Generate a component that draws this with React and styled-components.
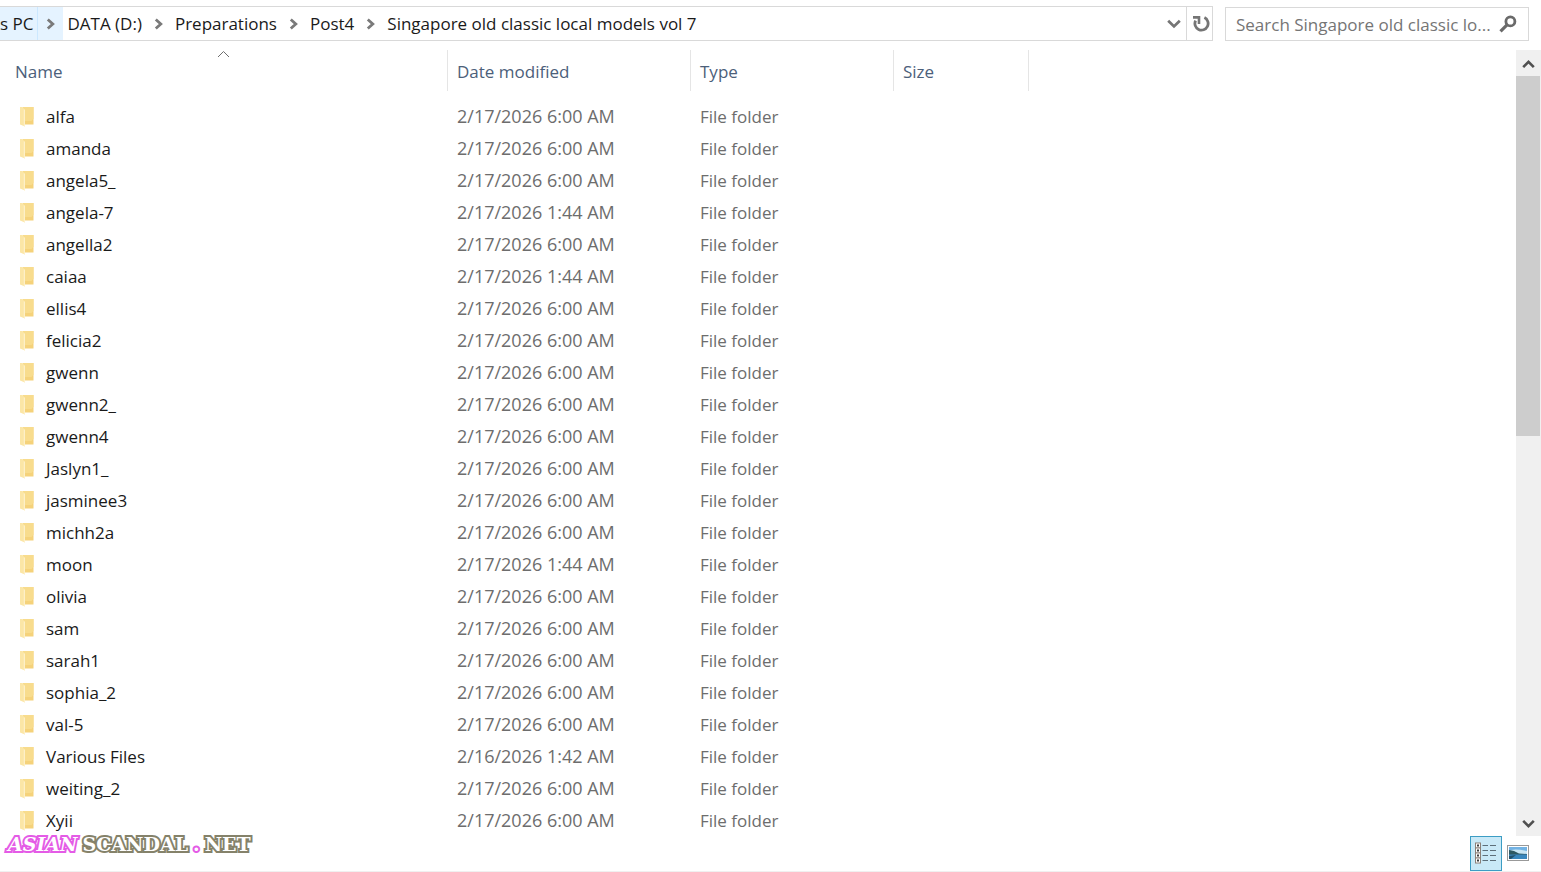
import React from "react";
import styled, { createGlobalStyle } from "styled-components";

const GlobalStyle = createGlobalStyle`
  * {
    box-sizing: border-box;
  }
  body {
    margin: 0;
    background: #fff;
    font-family: "Open Sans", "Noto Sans", sans-serif;
    font-size: 17px;
    color: #1a1a1a;
  }
  button, input {
    font: inherit;
    color: inherit;
  }
`;

const Window = styled.div`
  display: flex;
  flex-direction: column;
  height: 100vh;
  overflow: hidden;
  border-bottom: 1px solid #f0f0f0;
`;

const Toolbar = styled.header`
  display: flex;
  gap: 12px;
  flex: none;
  height: 50px;
  padding: 6px 12px 9px 0;
`;

const AddressBar = styled.nav`
  display: flex;
  flex: 1;
  border: 1px solid #d9d9d9;
  border-left: none;
`;

const Crumbs = styled.ol`
  display: flex;
  flex: 1;
  margin: 0;
  padding: 0;
  list-style: none;
`;

const Crumb = styled.li`
  display: flex;
  align-items: stretch;
  background: ${(props) => (props.$active ? "#e5f3ff" : "transparent")};
`;

const CrumbLink = styled.a`
  display: flex;
  align-items: center;
  padding: 0 4px;
  padding-left: ${(props) => (props.$cut ? "0" : "4px")};
  border-right: ${(props) => (props.$cut ? "1px solid #cce8ff" : "none")};
  color: #1a1a1a;
  text-decoration: none;
  white-space: nowrap;
`;

const CrumbArrow = styled.span`
  display: flex;
  align-items: center;
  justify-content: center;
  width: 25px;
`;

const BarButton = styled.button`
  display: flex;
  align-items: center;
  justify-content: center;
  width: 26px;
  padding: 0;
  border: none;
  border-left: ${(props) => (props.$divided ? "1px solid #d9d9d9" : "none")};
  background: none;
`;

const SearchBox = styled.form`
  display: flex;
  flex: none;
  width: 304px;
  margin-top: 1px;
  padding-left: 10px;
  border: 1px solid #d9d9d9;
`;

const SearchInput = styled.input`
  flex: 1;
  min-width: 0;
  padding: 0;
  border: none;
  outline: none;
  background: none;

  &::placeholder {
    color: #757575;
    opacity: 1;
  }
`;

const SearchButton = styled(BarButton)`
  width: 30px;
  padding-right: 10px;
`;

const Content = styled.main`
  display: flex;
  flex: 1;
  min-height: 0;
`;

const ListPane = styled.div`
  flex: 1;
  overflow: hidden;
`;

const FileTable = styled.table`
  width: 1029px;
  table-layout: fixed;
  border-collapse: collapse;
`;

const Col = styled.col`
  width: ${(props) => props.$width}px;
`;

const HeadCell = styled.th`
  height: 50px;
  padding: 0;
  vertical-align: top;
  font-weight: 400;
  text-align: left;
`;

const HeadLabel = styled.div`
  position: relative;
  display: flex;
  align-items: center;
  height: 41px;
  padding: 2px 9px 0;
  padding-left: ${(props) => (props.$first ? "15px" : "9px")};
  border-right: 1px solid #e5e5e5;
  color: #4c607a;
`;

const SortMark = styled.svg`
  position: absolute;
  top: 0;
  left: 0;
  right: 0;
  margin: 0 auto;
`;

const Cell = styled.td`
  height: 32px;
  padding: 0 9px;
  color: #6d6d6d;
  white-space: nowrap;
`;

const NameCell = styled(Cell)`
  padding-left: 19px;
  color: #1a1a1a;
`;

const DateCell = styled(Cell)`
  font-size: 18px;
`;

const FileName = styled.div`
  display: flex;
  align-items: center;
  gap: 11px;
`;

const Scrollbar = styled.div`
  display: flex;
  flex-direction: column;
  flex: none;
  width: 25px;
  background: #f0f0f0;
`;

const ScrollButton = styled.button`
  display: flex;
  align-items: center;
  justify-content: center;
  flex: none;
  height: 26px;
  padding: 2px 0 0;
  border: none;
  background: none;
`;

const Track = styled.div`
  flex: 1;
  padding-right: 1px;
`;

const Thumb = styled.div`
  height: 49%;
  background: #cdcdcd;
`;

const StatusBar = styled.footer`
  display: flex;
  justify-content: flex-end;
  flex: none;
  height: 35px;
  padding-right: 7px;
`;

const ViewButton = styled.button`
  display: flex;
  align-items: center;
  justify-content: center;
  width: 32px;
  padding: 0 1px 2px 0;
  border: 1px solid ${(props) => (props.$on ? "#3c9dc4" : "transparent")};
  background: ${(props) => (props.$on ? "#c9e9f7" : "none")};
`;

const Watermark = styled.div`
  position: absolute;
  left: 8px;
  bottom: 16px;
  display: flex;
  gap: 5px;
  font: 700 19px/24px "DejaVu Serif", serif;
  color: #fff;
  paint-order: stroke fill;
`;

const Mark = styled.span`
  font-style: ${(props) => (props.$slanted ? "italic" : "normal")};
  -webkit-text-stroke: 4px ${(props) => (props.$pink ? "#e45be6" : "#85826a")};
`;

const crumbs = [
  "s PC",
  "DATA (D:)",
  "Preparations",
  "Post4",
  "Singapore old classic local models vol 7",
];

const morning = "2/17/2026 6:00 AM";
const night = "2/17/2026 1:44 AM";

const files = [
  ["alfa", morning],
  ["amanda", morning],
  ["angela5_", morning],
  ["angela-7", night],
  ["angella2", morning],
  ["caiaa", night],
  ["ellis4", morning],
  ["felicia2", morning],
  ["gwenn", morning],
  ["gwenn2_", morning],
  ["gwenn4", morning],
  ["Jaslyn1_", morning],
  ["jasminee3", morning],
  ["michh2a", morning],
  ["moon", night],
  ["olivia", morning],
  ["sam", morning],
  ["sarah1", morning],
  ["sophia_2", morning],
  ["val-5", morning],
  ["Various Files", "2/16/2026 1:42 AM"],
  ["weiting_2", morning],
  ["Xyii", morning],
];

const CrumbChevron = () => (
  <svg width="9" height="12" viewBox="0 0 9 12" fill="none">
    <path d="M1.8 1.5L6.8 6L1.8 10.5" stroke="#7a7a7a" strokeWidth="2.8" />
  </svg>
);

const FolderIcon = () => (
  <svg width="16" height="22" viewBox="0 0 16 22">
    <path d="M4 2H14.5V19.5H5Z" fill="#f5d27a" />
    <path d="M4 2H14.5V13.5L12.5 16H6Z" fill="#f8dc8d" />
    <path d="M1 2H3.5L6 5V21.5L1 19.5Z" fill="#fbe6a6" />
    <path d="M4.8 4L6 5V21.5L4.8 21Z" fill="#fdf0c8" />
  </svg>
);

const ScrollArrow = ({ down }) => (
  <svg width="13" height="10" viewBox="0 0 13 10" fill="none">
    <path
      d={down ? "M1.2 1.8L6.5 7.2L11.8 1.8" : "M1.2 8.2L6.5 2.8L11.8 8.2"}
      stroke="#505050"
      strokeWidth="2.6"
    />
  </svg>
);

const RefreshIcon = () => (
  <svg width="20" height="18" viewBox="0 0 20 18" fill="none">
    <path
      d="M14.4 2.6A6.6 6.6 0 1 1 5.6 5.6"
      stroke="#757575"
      strokeWidth="2.8"
    />
    <path d="M3 2.4H9V9" stroke="#757575" strokeWidth="2.6" />
  </svg>
);

const SearchIcon = () => (
  <svg width="18" height="18" viewBox="0 0 18 18" fill="none">
    <circle cx="11.4" cy="6.4" r="4.5" stroke="#6a6a6a" strokeWidth="2.8" />
    <path d="M8 9.8L1.5 16.3" stroke="#6a6a6a" strokeWidth="3.2" />
  </svg>
);

const DetailsIcon = () => (
  <svg width="22" height="22" viewBox="0 0 22 22">
    {[0, 1, 2, 3].map((i) => (
      <g key={i} transform={`translate(0 ${i * 5})`}>
        <rect x="0.5" y="1" width="5" height="5" fill="#fff" stroke="#8b8078" />
        <rect x="2" y="2.5" width="2" height="2" fill="#3c3c3c" />
        <path d="M7.5 3.5H13M15 3.5H21" stroke="#5d6f7a" />
      </g>
    ))}
  </svg>
);

const PictureIcon = () => (
  <svg width="22" height="16" viewBox="0 0 22 16">
    <rect x="0.5" y="0.5" width="21" height="15" fill="#fff" stroke="#999" />
    <rect x="2" y="2" width="18" height="12" fill="#72b2e3" />
    <path d="M2 6Q6 3 20 6V9H2Z" fill="#c9e6f4" />
    <path d="M2 5L7 6L12 8.5L20 9V10H2Z" fill="#2e5962" />
    <path d="M2 9.5H20V14H2Z" fill="#3a87bd" />
    <path d="M2 11L9 10L4 14H2Z" fill="#22506b" />
  </svg>
);

const App = () => {
  return (
    <>
      <GlobalStyle />
      <Window>
        <Toolbar>
          <AddressBar aria-label="Address">
            <Crumbs>
              {crumbs.map((name, i) => (
                <Crumb key={name} $active={i === 0}>
                  <CrumbLink href="#" $cut={i === 0}>
                    {name}
                  </CrumbLink>
                  {i < crumbs.length - 1 && (
                    <CrumbArrow>
                      <CrumbChevron />
                    </CrumbArrow>
                  )}
                </Crumb>
              ))}
            </Crumbs>
            <BarButton aria-label="Previous locations">
              <svg width="16" height="10" viewBox="0 0 16 10" fill="none">
                <path d="M3.2 1.8L9 7.4L14.8 1.8" stroke="#757575" strokeWidth="2.8" />
              </svg>
            </BarButton>
            <BarButton aria-label="Refresh" $divided>
              <RefreshIcon />
            </BarButton>
          </AddressBar>
          <SearchBox>
            <SearchInput
              aria-label="Search"
              placeholder="Search Singapore old classic lo..."
            />
            <SearchButton type="button" aria-label="Start search">
              <SearchIcon />
            </SearchButton>
          </SearchBox>
        </Toolbar>

        <Content>
          <ListPane>
            <FileTable>
              <colgroup>
                <Col $width={448} />
                <Col $width={243} />
                <Col $width={203} />
                <Col $width={135} />
              </colgroup>
              <thead>
                <tr>
                  <HeadCell>
                    <HeadLabel $first>
                      Name
                      <SortMark width="13" height="8" viewBox="0 0 13 8" fill="none">
                        <path d="M1 7L6.5 1.5L12 7" stroke="#6e6e6e" />
                      </SortMark>
                    </HeadLabel>
                  </HeadCell>
                  {["Date modified", "Type", "Size"].map((title) => (
                    <HeadCell key={title}>
                      <HeadLabel>{title}</HeadLabel>
                    </HeadCell>
                  ))}
                </tr>
              </thead>
              <tbody>
                {files.map(([name, date]) => (
                  <tr key={name}>
                    <NameCell>
                      <FileName>
                        <FolderIcon />
                        {name}
                      </FileName>
                    </NameCell>
                    <DateCell>{date}</DateCell>
                    <Cell>File folder</Cell>
                    <Cell />
                  </tr>
                ))}
              </tbody>
            </FileTable>
          </ListPane>
          <Scrollbar>
            <ScrollButton aria-label="Scroll up">
              <ScrollArrow />
            </ScrollButton>
            <Track>
              <Thumb />
            </Track>
            <ScrollButton aria-label="Scroll down">
              <ScrollArrow down />
            </ScrollButton>
          </Scrollbar>
        </Content>

        <StatusBar>
          <ViewButton aria-label="Details view" $on>
            <DetailsIcon />
          </ViewButton>
          <ViewButton aria-label="Large icons view">
            <PictureIcon />
          </ViewButton>
        </StatusBar>
      </Window>
      <Watermark>
        <Mark $pink $slanted>ASIAN</Mark>
        <Mark>SCANDAL</Mark>
        <Mark $pink>.</Mark>
        <Mark>NET</Mark>
      </Watermark>
    </>
  );
};

export default App;
